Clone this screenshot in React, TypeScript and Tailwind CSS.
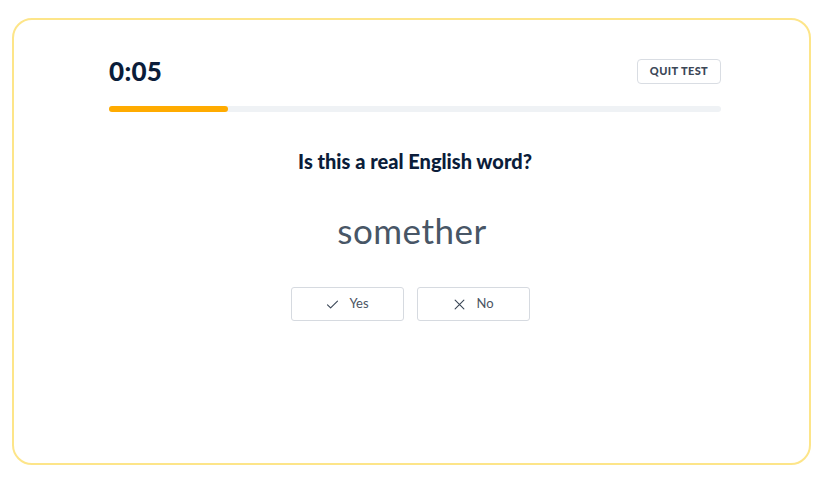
import React from "react";

export default function App() {
  return (
    <div className="w-[831px] h-[480px] bg-white pt-[18px] pl-[12px] pr-[20px] pb-[15px]" style={{ fontFamily: "Lato, 'Noto Sans', sans-serif" }}>
      <div className="h-[447px] w-[799px] rounded-[20px] border-2 border-[#fde589] bg-white pl-[95px] pr-[88px] pt-[38px]">
        <div className="flex items-center justify-between h-[26px]">
          <div className="text-[26px] font-black leading-none text-[#0b1d3a] tracking-[0.3px]">0:05</div>
          <button className="h-[25px] w-[84px] rounded-[4px] border border-[#d9dde3] text-[11px] font-black tracking-[0.4px] text-[#3b4757]">QUIT TEST</button>
        </div>
        <div className="mt-[22px] h-[6px] w-full rounded-full bg-[#eff2f5]">
          <div className="h-[6px] w-[119px] rounded-full bg-[#ffab00]" />
        </div>
        <div className="mt-[38px] text-center text-[20px] font-black leading-[22px] text-[#0b1d3a]">Is this a real English word?</div>
        <div className="mt-[38px] pr-[6px] text-center text-[35px] leading-[40px] text-[#485666] tracking-[0.5px]">somether</div>
        <div className="mt-[37px] flex justify-center gap-[13px] pr-[10px]">
          <button className="flex h-[34px] w-[113px] items-center justify-center gap-[9px] rounded-[3px] border border-[#d6dae0] text-[13px] text-[#4b5563]">
            <svg width="15" height="15" viewBox="0 0 24 24" fill="none" stroke="#3b4757" strokeWidth="1.8" strokeLinecap="round" strokeLinejoin="round"><path d="M4 12.5l5 5L20 6.5" /></svg>
            <span>Yes</span>
          </button>
          <button className="flex h-[34px] w-[113px] items-center justify-center gap-[9px] rounded-[3px] border border-[#d6dae0] text-[13px] text-[#4b5563]">
            <svg width="15" height="15" viewBox="0 0 24 24" fill="none" stroke="#3b4757" strokeWidth="1.8" strokeLinecap="round"><path d="M5 5l14 14M19 5L5 19" /></svg>
            <span>No</span>
          </button>
        </div>
      </div>
    </div>
  );
}
